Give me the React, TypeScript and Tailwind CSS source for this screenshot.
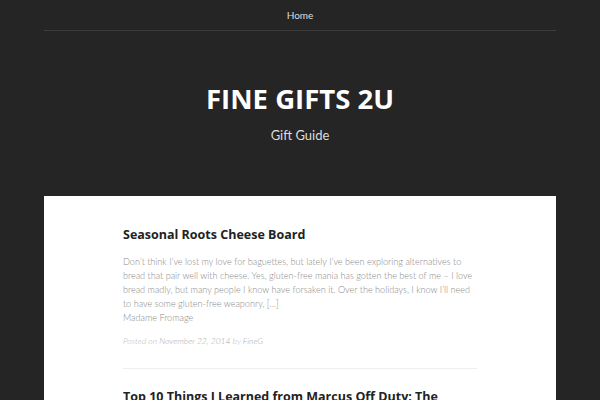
export default function App() {
  return (
    <div className="min-h-screen bg-[#252525] font-['Lato',sans-serif]">
      <nav className="mx-[44px] flex h-[31px] items-center justify-center border-b border-[#3c3c3c]">
        <a className="text-[10px] text-[#dddddd]">Home</a>
      </nav>
      <header className="flex flex-col items-center pt-[52px] pb-[51px]">
        <h1 className="font-['Open_Sans',sans-serif] text-[27.5px] leading-[32px] font-bold text-white">
          FINE GIFTS 2U
        </h1>
        <p className="mt-[10px] text-[13px] leading-[20px] text-[#dddddd]">Gift Guide</p>
      </header>
      <main className="mx-[44px] bg-white px-[79px] pt-[29px]">
        <article className="border-b border-[#eeeeee] pb-[21px]">
          <h2 className="font-['Open_Sans',sans-serif] text-[12.5px] leading-[20px] font-bold text-[#222222]">
            Seasonal Roots Cheese Board
          </h2>
          <div className="mt-[10px] text-[9.1px] leading-[14px] font-light text-[#8a8a8a]">
            <p>
              Don’t think I’ve lost my love for baguettes, but lately I’ve been exploring alternatives to bread
              that pair well with cheese. Yes, gluten-free mania has gotten the best of me – I love bread madly,
              but many people I know have forsaken it. Over the holidays, I know I’ll need to have some gluten-free
              weaponry, […]
            </p>
            <p>Madame Fromage</p>
          </div>
          <p className="mt-[10px] text-[8.5px] leading-[12px] italic font-light text-[#bbbbbb]">
            Posted on <a className="text-[#aaaaaa]">November 22, 2014</a> by <a className="text-[#aaaaaa]">FineG</a>
          </p>
        </article>
        <article className="pt-[18px]">
          <h2 className="font-['Open_Sans',sans-serif] text-[12.5px] leading-[20px] font-bold text-[#222222]">
            Top 10 Things I Learned from Marcus Off Duty: The
          </h2>
        </article>
      </main>
    </div>
  );
}
